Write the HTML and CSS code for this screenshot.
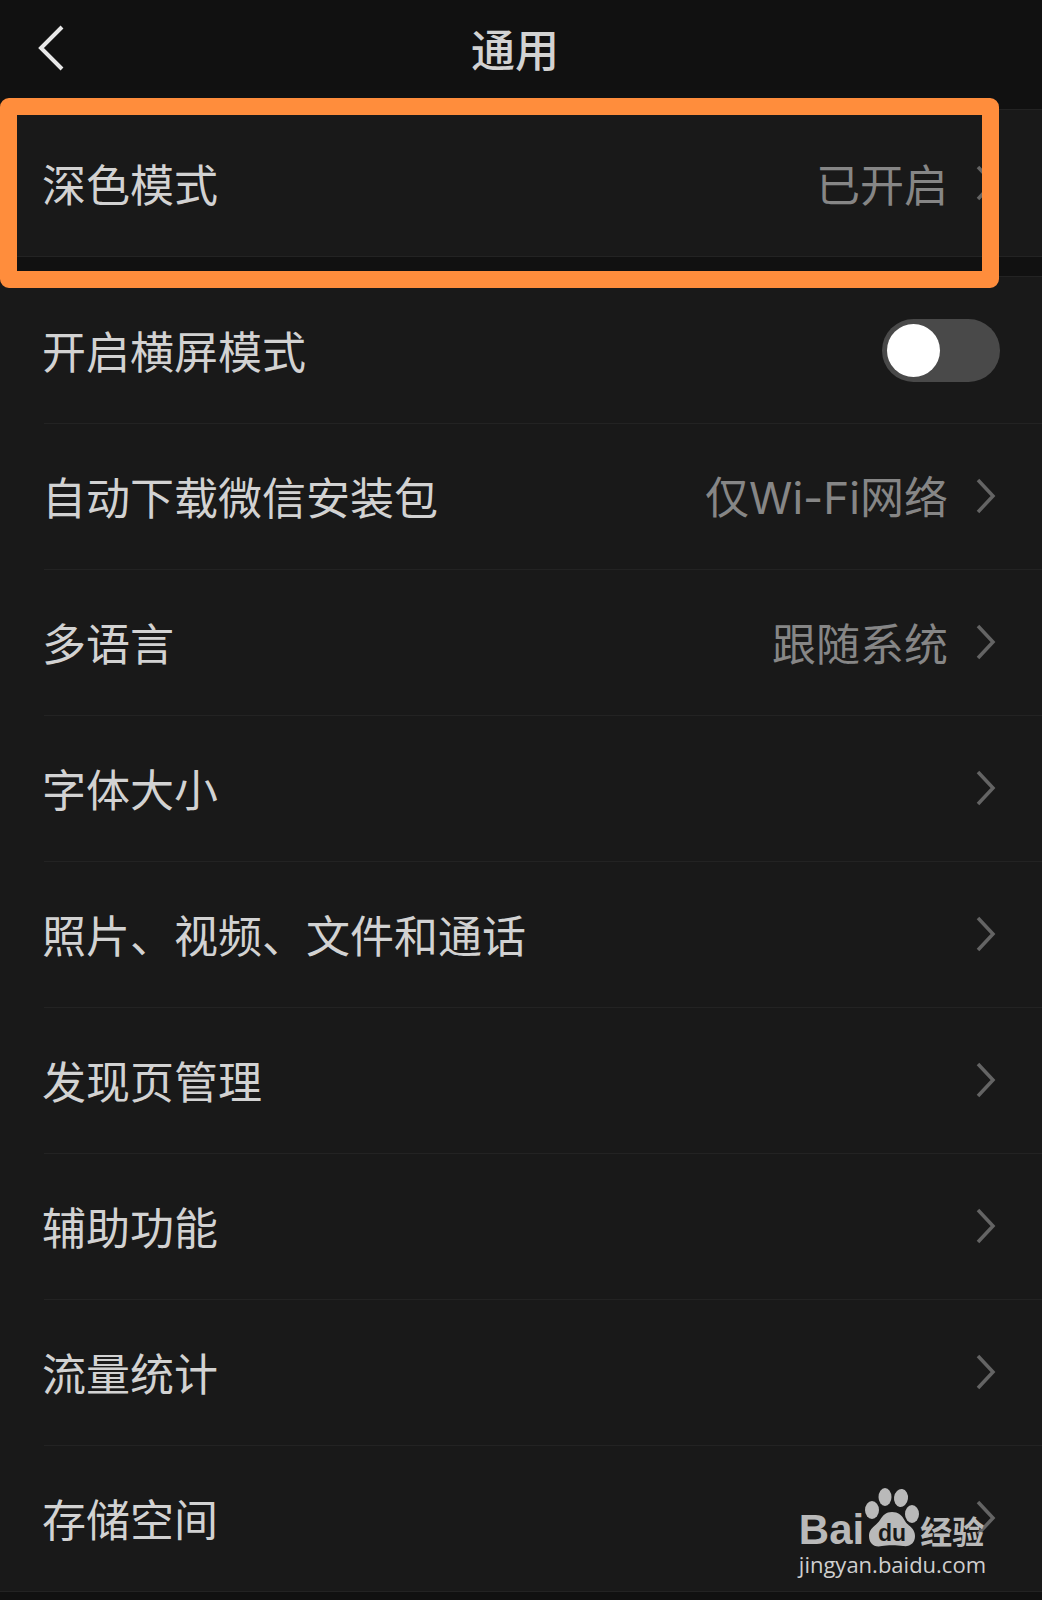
FILE: index.html
```html
<!DOCTYPE html>
<html lang="zh-CN">
<head>
  <meta charset="utf-8">
  <meta name="viewport" content="width=device-width, initial-scale=1">
  <title>通用</title>
  <link rel="stylesheet" href="styles.css">
</head>
<body>
  <svg class="symbols" aria-hidden="true">
    <symbol id="chevron" viewBox="0 0 20 36">
      <path d="M2 2 L17 18 L2 34" fill="none" stroke="currentColor" stroke-width="3.5"/>
    </symbol>
  </svg>

  <div class="page">
    <header class="navbar">
      <button class="back" aria-label="返回">
        <svg width="26" height="46" viewBox="0 0 26 46">
          <path d="M24 2 L3 23 L24 44" fill="none" stroke="currentColor" stroke-width="4"/>
        </svg>
      </button>
      <h1>通用</h1>
    </header>

    <main>
      <div class="group highlight">
        <a class="row" href="#">
          <span class="label">深色模式</span>
          <span class="value">已开启</span>
          <svg class="chevron"><use href="#chevron"/></svg>
        </a>
      </div>

      <div class="group">
        <div class="row">
          <label class="label" for="landscape">开启横屏模式</label>
          <input class="switch" type="checkbox" id="landscape">
        </div>
        <a class="row" href="#">
          <span class="label">自动下载微信安装包</span>
          <span class="value">仅<span class="latin">Wi-Fi</span>网络</span>
          <svg class="chevron"><use href="#chevron"/></svg>
        </a>
        <a class="row" href="#">
          <span class="label">多语言</span>
          <span class="value">跟随系统</span>
          <svg class="chevron"><use href="#chevron"/></svg>
        </a>
        <a class="row" href="#">
          <span class="label">字体大小</span>
          <svg class="chevron"><use href="#chevron"/></svg>
        </a>
        <a class="row" href="#">
          <span class="label">照片、视频、文件和通话</span>
          <svg class="chevron"><use href="#chevron"/></svg>
        </a>
        <a class="row" href="#">
          <span class="label">发现页管理</span>
          <svg class="chevron"><use href="#chevron"/></svg>
        </a>
        <a class="row" href="#">
          <span class="label">辅助功能</span>
          <svg class="chevron"><use href="#chevron"/></svg>
        </a>
        <a class="row" href="#">
          <span class="label">流量统计</span>
          <svg class="chevron"><use href="#chevron"/></svg>
        </a>
        <a class="row" href="#">
          <span class="label">存储空间</span>
          <svg class="chevron"><use href="#chevron"/></svg>
        </a>
      </div>
    </main>

    <div class="watermark">
      <div class="brand">
        <span class="bai">Bai</span>
        <svg class="paw" width="56" height="62" viewBox="0 0 56 62">
          <g fill="currentColor">
            <ellipse cx="8" cy="24" rx="7" ry="9"/>
            <ellipse cx="21" cy="11" rx="6.500" ry="9"/>
            <ellipse cx="37" cy="12" rx="7" ry="9" transform="rotate(8 37 12)"/>
            <ellipse cx="48" cy="28" rx="7" ry="9"/>
            <path d="M28 26 C34 26 38 29 41 35 C44 40 51 42 51 50 C51 57 46 61 39 60 C33 59 23 59 18 60 C10 62 5 57 5 50 C5 42 12 40 16 34 C19 29 22 26 28 26 Z"/>
          </g>
          <text class="du" x="28" y="55" text-anchor="middle">du</text>
        </svg>
        <span class="jingyan">经验</span>
      </div>
      <div class="site">jingyan.baidu.com</div>
    </div>
  </div>
</body>
</html>
```
FILE: styles.css
```css
* {
  box-sizing: border-box;
}

body {
  margin: 0;
  background-color: #111;
  color: #d2d2d2;
  font-family: "Noto Sans CJK SC", sans-serif;
  font-size: 44px;
  line-height: 64px;
}

.symbols {
  display: none;
}

.page {
  position: relative;
  min-height: 100vh;
}

.navbar {
  display: grid;
  grid-template-columns: 90px 1fr 90px;
  align-items: center;
  height: 110px;
  padding: 0 12px 14px 0;
}

.navbar h1 {
  margin: 0;
  font-size: inherit;
  font-weight: 500;
  text-align: center;
}

.back {
  display: flex;
  padding: 0 0 0 38px;
  border: none;
  background: none;
  color: #e8e8e8;
  cursor: pointer;
}

.group {
  background-color: #191919;
  box-shadow: 0 -1px #232323, 0 1px #232323;
}

.group + .group {
  margin-top: 21px;
}

.row {
  display: flex;
  align-items: center;
  height: 146px;
  padding: 0 42px;
  color: inherit;
  text-decoration: none;
}

/* inset divider between rows */
.row + .row {
  background: linear-gradient(#232323, #232323) 44px 0 / 100% 1px no-repeat;
}

.label {
  flex: 1;
}

.value {
  color: #868686;
}

.latin {
  font-family: Inter, sans-serif;
}

.chevron {
  width: 20px;
  height: 36px;
  margin: 0 4px 0 28px;
  color: #646464;
}

.switch {
  appearance: none;
  width: 118px;
  height: 63px;
  margin: 0;
  padding: 5px;
  border-radius: 32px;
  background-color: #494949;
  cursor: pointer;
}

.switch::before {
  content: "";
  display: block;
  width: 53px;
  height: 53px;
  border-radius: 50%;
  background-color: #fff;
}

.switch:checked {
  background-color: #07c160;
}

.switch:checked::before {
  margin-left: auto;
}

/* marker frame drawn over the first row */
.highlight {
  position: relative;
}

.highlight::after {
  content: "";
  position: absolute;
  top: -12px;
  right: 43px;
  bottom: -32px;
  left: 0;
  border: 17px solid #ff8d3c;
  border-radius: 9px;
  pointer-events: none;
}

.watermark {
  position: absolute;
  right: 56px;
  bottom: 20px;
  color: #b9b9b9;
  pointer-events: none;
}

.brand {
  display: flex;
  align-items: flex-end;
  height: 62px;
}

.bai {
  font: bold 42px/36px "Liberation Sans", sans-serif;
}

.du {
  font: bold 23px "Liberation Sans", sans-serif;
  fill: #191919;
}

.jingyan {
  font-size: 32px;
  font-weight: 700;
  line-height: 36px;
}

.site {
  color: #cfcfcf;
  font: 500 22px/32px "Open Sans", sans-serif;
}
```
